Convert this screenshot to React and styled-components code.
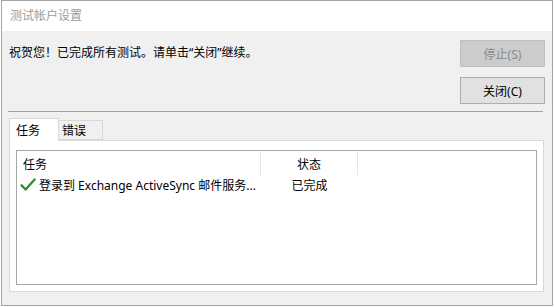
import React from 'react';
import styled, { createGlobalStyle } from 'styled-components';

const FONT = '"Noto Sans", "Noto Sans CJK SC", sans-serif';

const GlobalStyle = createGlobalStyle`
  html, body {
    margin: 0;
    padding: 0;
    background: #ffffff;
  }
  body {
    font-family: ${FONT};
    font-size: 12px;
  }
`;

const CheckIcon = () => (
  <svg width="16" height="14" viewBox="0 0 16 14">
    <path
      d="M1.5 7.2 L5.6 11.6 L14.6 1.4"
      fill="none"
      stroke="#2b8a2b"
      strokeWidth="2.2"
      strokeLinecap="round"
      strokeLinejoin="round"
    />
  </svg>
);

const App = () => {
  return (
    <>
      <GlobalStyle />
      <Window>
        <TitleBar>测试帐户设置</TitleBar>
        <Body>
          <TopRow>
            <Message>祝贺您！已完成所有测试。请单击“关闭”继续。</Message>
            <ButtonStack>
              <Button disabled>停止(S)</Button>
              <Button>关闭(C)</Button>
            </ButtonStack>
          </TopRow>
          <Separator />
          <TabArea>
            <TabList>
              <Tab $active>任务</Tab>
              <Tab>错误</Tab>
            </TabList>
            <Panel>
              <ListView>
                <HeaderRow>
                  <HeaderCell $width={244}>任务</HeaderCell>
                  <HeaderCell $width={97} $center>状态</HeaderCell>
                </HeaderRow>
                <Row>
                  <TaskCell>
                    <CheckIcon />
                    <span>登录到 Exchange ActiveSync 邮件服务...</span>
                  </TaskCell>
                  <StatusCell>已完成</StatusCell>
                </Row>
              </ListView>
            </Panel>
          </TabArea>
        </Body>
      </Window>
    </>
  );
};

const Window = styled.div`
  box-sizing: border-box;
  margin-left: 1px;
  width: 552px;
  height: 306px;
  border: 1px solid #a3a3a3;
  display: flex;
  flex-direction: column;
  background: #f0f0f0;
`;
const TitleBar = styled.div`
  height: 30px;
  flex-shrink: 0;
  background: #ffffff;
  padding-left: 8px;
  line-height: 30px;
  font-size: 12px;
  color: #9c9c9c;
`;
const Body = styled.div`
  flex: 1;
  display: flex;
  flex-direction: column;
  padding: 9px 7px 13px 7px;
  min-height: 0;
`;
const TopRow = styled.div`
  display: grid;
  grid-template-columns: 1fr 85px;
  align-items: start;
`;
const Message = styled.div`
  margin-top: 5px;
  line-height: 16px;
  color: #000000;
`;
const ButtonStack = styled.div`
  display: flex;
  flex-direction: column;
  gap: 10px;
`;
const Button = styled.button`
  box-sizing: border-box;
  height: 27px;
  width: 85px;
  padding: 0;
  font-family: ${FONT};
  font-size: 12px;
  color: #000000;
  background: #e1e1e1;
  border: 1px solid #adadad;
  &:disabled {
    color: #8a8a8a;
    background: #cccccc;
    border-color: #bfbfbf;
  }
`;
const Separator = styled.div`
  height: 1px;
  margin: 7px 2px 0 -1px;
  background: #a0a0a0;
`;
const TabArea = styled.div`
  flex: 1;
  display: flex;
  flex-direction: column;
  margin-top: 6px;
  min-height: 0;
`;
const TabList = styled.div`
  display: flex;
  align-items: flex-end;
  height: 22px;
  position: relative;
  z-index: 1;
`;
const Tab = styled.div`
  box-sizing: border-box;
  display: flex;
  align-items: center;
  color: #000000;
  border: 1px solid #d9d9d9;
  width: ${(p) => (p.$active ? 50 : 44)}px;
  height: ${(p) => (p.$active ? 23 : 20)}px;
  padding-left: ${(p) => (p.$active ? 6 : 3)}px;
  margin-bottom: ${(p) => (p.$active ? -1 : 0)}px;
  background: ${(p) => (p.$active ? '#ffffff' : '#f0f0f0')};
  border-bottom: ${(p) => (p.$active ? 'none' : '1px solid #d9d9d9')};
  ${(p) => !p.$active && 'border-left: none;'}
`;
const Panel = styled.div`
  flex: 1;
  display: flex;
  flex-direction: column;
  margin-right: 1px;
  background: #ffffff;
  border: 1px solid #d9d9d9;
  padding: 9px 6px 6px 6px;
  min-height: 0;
`;
const ListView = styled.div`
  flex: 1;
  border: 1px solid #a4a7ac;
  background: #ffffff;
`;
const HeaderRow = styled.div`
  display: flex;
  height: 24px;
`;
const HeaderCell = styled.div`
  box-sizing: border-box;
  width: ${(p) => p.$width}px;
  display: flex;
  align-items: center;
  justify-content: ${(p) => (p.$center ? 'center' : 'flex-start')};
  padding-left: ${(p) => (p.$center ? 0 : 6)}px;
  margin-top: 1px;
  border-right: 1px solid #e5e5e5;
  color: #000000;
`;
const Row = styled.div`
  display: flex;
  align-items: center;
  height: 20px;
`;
const TaskCell = styled.div`
  width: 244px;
  display: flex;
  align-items: center;
  gap: 3px;
  padding-left: 3px;
  box-sizing: border-box;
  white-space: nowrap;
  color: #000000;
`;
const StatusCell = styled.div`
  width: 97px;
  text-align: center;
  color: #000000;
`;

export default App;
